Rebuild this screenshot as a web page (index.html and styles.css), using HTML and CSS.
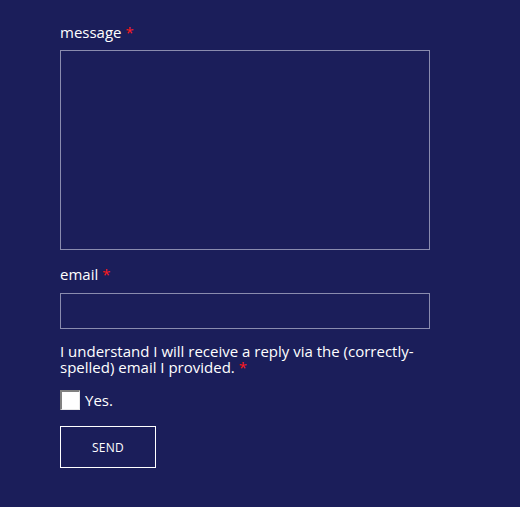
FILE: index.html
```html
<!DOCTYPE html>
<html>
<head>
<meta charset="utf-8">
<link rel="stylesheet" href="styles.css">
</head>
<body>
<form class="form">
  <label class="label" for="msg">message <span class="req">*</span></label>
  <textarea id="msg" class="textarea"></textarea>
  <label class="label label-email" for="em">email <span class="req">*</span></label>
  <input id="em" class="input" type="text">
  <p class="consent">I understand I will receive a reply via the (correctly-spelled) email I provided. <span class="req req-inline">*</span></p>
  <label class="check-row"><span class="checkbox"></span><span class="yes">Yes.</span></label>
  <button type="button" class="send">SEND</button>
</form>
</body>
</html>
```
FILE: styles.css
```css
html, body {
  margin: 0;
  background: #1b1e5a;
}
body {
  font-family: "Open Sans", Lato, sans-serif;
  color: #ffffff;
  font-size: 15px;
  height: 507px;
  overflow: hidden;
}
.form {
  display: flex;
  flex-direction: column;
  align-items: flex-start;
  padding: 22px 0 0 60px;
  width: 370px;
}
.label {
  font-size: 15px;
  line-height: 20px;
  height: 20px;
  margin-bottom: 8px;
}
.label-email {
  margin-bottom: 9px;
}
.req {
  color: #ff1a1a;
}
.req-inline {
  display: inline-block;
  line-height: 16px;
}
.textarea {
  box-sizing: border-box;
  width: 370px;
  height: 200px;
  background: transparent;
  border: 1px solid #8a8cae;
  margin: 0 0 14px 0;
  padding: 0;
  resize: none;
}
.input {
  box-sizing: border-box;
  width: 370px;
  height: 36px;
  background: transparent;
  border: 1px solid #8a8cae;
  margin: 0;
  padding: 0;
}
.consent {
  margin: 14px 0 0 0;
  font-size: 15px;
  line-height: 16px;
  width: 370px;
}
.check-row {
  display: flex;
  align-items: center;
  gap: 5px;
  margin-top: 15px;
}
.checkbox {
  box-sizing: border-box;
  width: 20px;
  height: 20px;
  background: #fff;
  border-top: 2px solid #808080;
  border-left: 2px solid #808080;
  border-right: 1px solid #e8e8e8;
  border-bottom: 1px solid #e8e8e8;
}
.yes {
  font-size: 15px;
  line-height: 20px;
}
.send {
  margin-top: 16px;
  width: 96px;
  height: 42px;
  background: transparent;
  border: 1px solid #ffffff;
  color: #fff;
  font-family: "Open Sans", Lato, sans-serif;
  font-size: 12px;
  letter-spacing: 0.3px;
  padding: 0;
}
```
